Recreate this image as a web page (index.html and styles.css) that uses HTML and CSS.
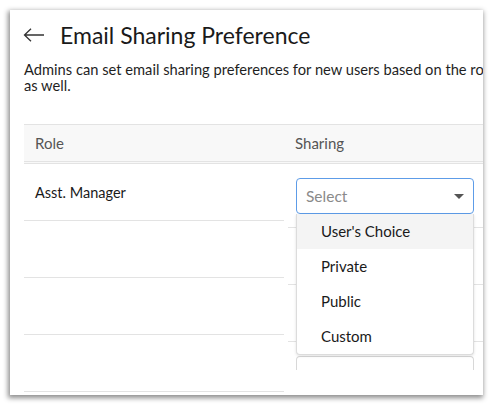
FILE: index.html
```html
<!DOCTYPE html>
<html>
<head>
<meta charset="utf-8">
<link rel="stylesheet" href="styles.css">
</head>
<body>
<div class="frame">
  <div class="card">
    <div class="head">
      <svg class="back" width="22" height="14" viewBox="0 0 22 14"><path d="M21 7H1.5M8 0.8L1.5 7L8 13.2" fill="none" stroke="#333" stroke-width="1.3"/></svg>
      <h1 class="title">Email Sharing Preference</h1>
    </div>
    <p class="desc">Admins can set email sharing preferences for new users based on the role as well.</p>
    <div class="table">
      <div class="thead">
        <div class="th role">Role</div>
        <div class="th share">Sharing</div>
      </div>
      <div class="row">
        <div class="cell role">Asst. Manager</div>
        <div class="cell share">
          <div class="selwrap">
            <div class="select open"><span class="ph">Select</span><span class="caret"></span></div>
            <ul class="menu">
              <li class="item active">User's Choice</li>
              <li class="item">Private</li>
              <li class="item">Public</li>
              <li class="item">Custom</li>
            </ul>
            <div class="ghost"></div>
          </div>
        </div>
      </div>
      <div class="row">
        <div class="cell role"></div>
        <div class="cell share"></div>
      </div>
      <div class="row">
        <div class="cell role"></div>
        <div class="cell share"></div>
      </div>
      <div class="row">
        <div class="cell role"></div>
        <div class="cell share"></div>
      </div>
    </div>
  </div>
</div>
</body>
</html>
```
FILE: styles.css
```css
html, body {
  margin: 0;
  padding: 0;
  background: #fff;
}
body {
  font-family: Lato, "Open Sans", sans-serif;
  color: #222;
}
.frame {
  padding: 10px;
  width: 473px;
}
.card {
  width: 473px;
  height: 385px;
  background: #fff;
  overflow: hidden;
  box-shadow: -1px 2px 5px 1px rgba(0, 0, 0, 0.45);
  box-sizing: border-box;
}
.head {
  display: flex;
  align-items: center;
  padding: 11px 0 0 13px;
  height: 28px;
}
.back {
  display: block;
  margin-right: 15px;
}
.title {
  margin: 0;
  font-size: 23px;
  font-weight: 400;
  line-height: 28px;
  color: #1a1a1a;
}
.desc {
  margin: 12px 0 0 14px;
  width: 480px;
  font-size: 14.7px;
  line-height: 16px;
  color: #1f1f1f;
}
.table {
  margin: 31px 0 0 14px;
  width: 540px;
}
.thead {
  display: flex;
  height: 36px;
  align-items: center;
  background: #f8f8f8;
  border-top: 1px solid #e3e3e3;
  border-bottom: 3px double #e3e3e3;
}
.th {
  font-size: 15px;
  color: #555;
}
.role {
  width: 260px;
  padding-left: 11px;
  box-sizing: border-box;
  flex: none;
}
.th.share {
  padding-left: 11px;
}
.row {
  display: flex;
  align-items: flex-start;
  height: 57px;
}
.cell.role {
  height: 57px;
  border-bottom: 1px solid #e3e3e3;
  display: flex;
  align-items: center;
  font-size: 14.5px;
  color: #1a1a1a;
}
.cell.share {
  flex: 1;
  margin-top: 7px;
  margin-left: 4px;
  height: 57px;
  border-bottom: 1px solid #e3e3e3;
  padding: 7px 0 0 8px;
  box-sizing: border-box;
}
.selwrap {
  position: relative;
  width: 178px;
}
.select {
  height: 36px;
  box-sizing: border-box;
  border: 1px solid #cfcfcf;
  border-radius: 4px;
  display: flex;
  align-items: center;
  justify-content: space-between;
  padding: 0 9px 0 9px;
  background: #fff;
}
.select.open {
  border-color: #5d9ce8;
}
.ph {
  font-size: 15.5px;
  color: #8a8a8a;
}
.caret {
  width: 0;
  height: 0;
  border-left: 5px solid transparent;
  border-right: 5px solid transparent;
  border-top: 5px solid #555;
}
.menu {
  position: absolute;
  z-index: 2;
  left: 0;
  top: 36px;
  width: 178px;
  box-sizing: border-box;
  margin: 0;
  padding: 0;
  list-style: none;
  background: #fff;
  border: 1px solid #dcdcdc;
  border-top: none;
  border-radius: 0 0 4px 4px;
  box-shadow: 0 1px 3px rgba(0, 0, 0, 0.12);
}
.item {
  height: 35px;
  line-height: 35px;
  padding-left: 24px;
  font-size: 15px;
  color: #1a1a1a;
}
.item.active {
  background: #f4f4f4;
}
.ghost {
  position: absolute;
  z-index: 1;
  left: 0;
  top: 178px;
  width: 178px;
  height: 14px;
  box-sizing: border-box;
  border: 1px solid #d8d8d8;
  border-bottom: none;
  border-radius: 4px 4px 0 0;
  background: #fff;
}
```
